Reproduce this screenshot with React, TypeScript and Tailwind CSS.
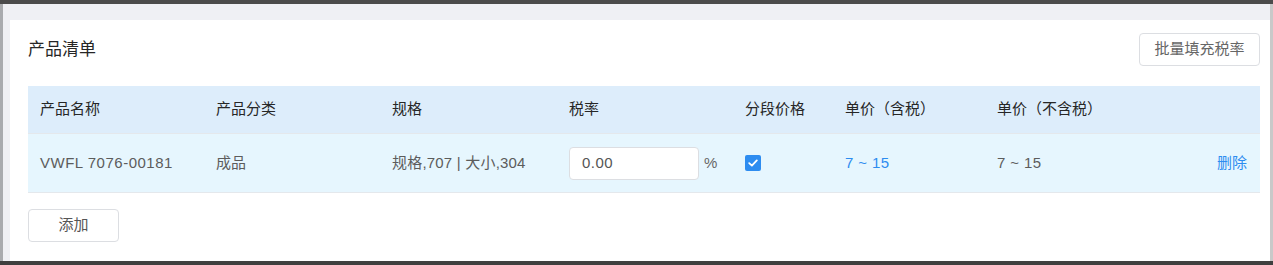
import { JSX } from 'react';

const cols = [
  { key: 'name', label: '产品名称', width: 'w-[176px]' },
  { key: 'type', label: '产品分类', width: 'w-[176px]' },
  { key: 'spec', label: '规格', width: 'w-[177px]' },
  { key: 'tax', label: '税率', width: 'w-[176px]' },
  { key: 'step', label: '分段价格', width: 'w-[100px]' },
  { key: 'priceTax', label: '单价（含税）', width: 'w-[152px]' },
  { key: 'price', label: '单价（不含税）', width: 'flex-1' },
];

function CheckBox(): JSX.Element {
  return (
    <span className="flex h-4 w-4 items-center justify-center rounded-[2px] bg-[#2d8cf0]">
      <svg width="10" height="8" viewBox="0 0 10 8" fill="none">
        <path d="M1.2 4.1 L3.9 6.6 L8.8 1.4" stroke="#fff" strokeWidth="1.8" strokeLinecap="round" strokeLinejoin="round" />
      </svg>
    </span>
  );
}

export default function App(): JSX.Element {
  return (
    <div
      className="flex h-[265px] w-[1273px] flex-col overflow-hidden bg-[#eff0f4]"
      style={{ fontFamily: '"Liberation Sans", "Noto Sans CJK SC", sans-serif' }}
    >
      <div className="h-1 w-full shrink-0 bg-[#4b4b4b]" />
      <div className="flex min-h-0 flex-1">
        <div className="w-[3px] shrink-0 bg-[#a9abae]" />
        <div className="flex-1 pl-[7px] pt-4">
          {/* 产品清单 */}
          <section className="h-full bg-white pl-[18px] pr-[10px] pt-[13px]">
            <div className="flex items-center justify-between">
              <h2 className="text-[17px] text-[#262626]">产品清单</h2>
              <button className="h-[33px] w-[121px] rounded-[4px] border border-[#dcdee2] bg-white text-[15px] text-[#666]">
                批量填充税率
              </button>
            </div>

            <div className="mt-5 text-[15px]">
              <div className="flex h-[48px] items-center border-b border-[#e4e8ec] bg-[#ddedfb] text-[#262626]">
                {cols.map((c) => (
                  <div key={c.key} className={`${c.width} pl-3`}>
                    {c.label}
                  </div>
                ))}
              </div>
              <div className="flex h-[59px] items-center border-b border-[#e4e8ec] bg-[#e6f6fe] text-[#5c5c5c]">
                <div className="w-[176px] pl-3 tracking-[0.5px]">VWFL 7076-00181</div>
                <div className="w-[176px] pl-3">成品</div>
                <div className="w-[177px] pl-3 tracking-[0.2px]">规格,707 | 大小,304</div>
                <div className="flex w-[176px] items-center pl-3">
                  <div className="flex h-[33px] w-[130px] items-center rounded-[4px] border border-[#dcdee2] bg-white pl-3 tracking-[0.5px] text-[#555]">
                    0.00
                  </div>
                  <span className="ml-[5px] text-[#666]">%</span>
                </div>
                <div className="w-[100px] pl-3">
                  <CheckBox />
                </div>
                <div className="w-[152px] pl-3 tracking-[0.4px] text-[#2d8cf0]">7 ~ 15</div>
                <div className="flex flex-1 items-center justify-between pl-3 pr-[13px]">
                  <span className="tracking-[0.4px]">7 ~ 15</span>
                  <span className="text-[#2d8cf0]">删除</span>
                </div>
              </div>
            </div>

            <button className="mt-4 h-[33px] w-[91px] rounded-[4px] border border-[#dcdee2] bg-white text-[15px] text-[#555]">
              添加
            </button>
          </section>
        </div>
        <div className="w-[3px] shrink-0 bg-[#c9c9c9]" />
      </div>
      <div className="h-1 w-full shrink-0 bg-[#3f3f3f]" />
    </div>
  );
}
